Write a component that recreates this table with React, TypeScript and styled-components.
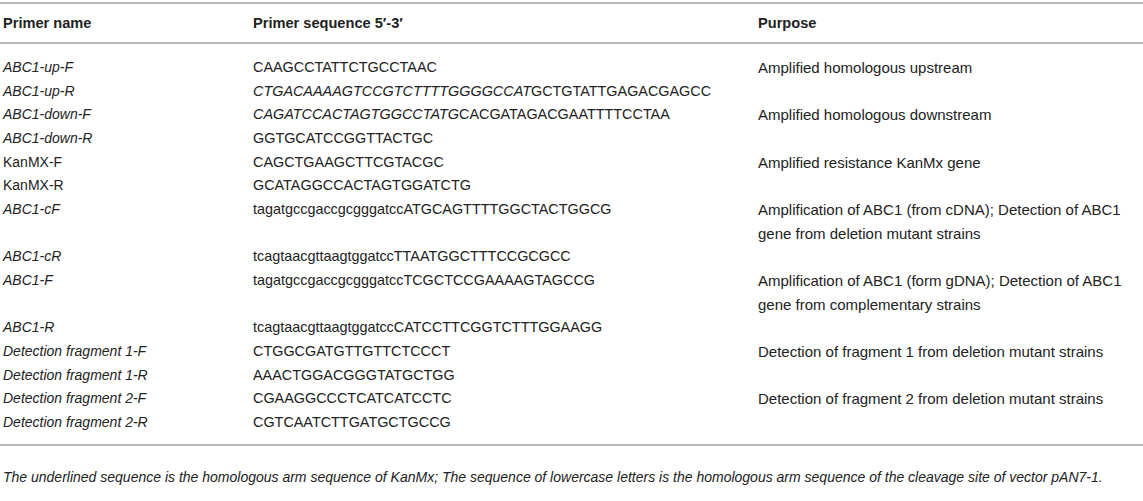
import React from "react";
import styled, { createGlobalStyle } from "styled-components";

const Global = createGlobalStyle`
  html, body { margin: 0; padding: 0; background: #fff; }
  body { font-family: "Liberation Sans", Arial, Helvetica, sans-serif; color: #222; }
`;

const Wrap = styled.div`
  width: 1143px;
  padding-top: 2px;
`;

const Grid = styled.div`
  display: grid;
  grid-template-columns: 250px 505px 1fr;
  padding-left: 3px;
  font-size: 14px;
`;

const HeaderRow = styled.div`
  display: contents;
`;

const HeadCell = styled.div`
  font-weight: bold;
  font-size: 14.6px;
  line-height: 38px;
  border-top: 2px solid #b8b8b8;
  border-bottom: 2px solid #b8b8b8;
  margin-bottom: 12px;
  &:first-child { margin-left: -3px; padding-left: 3px; }
`;

type Kind = "name" | "seq" | "purpose";

const sizes: Record<Kind, string> = { name: "14px", seq: "14.4px", purpose: "15px" };

const Cell = styled.div<{ $kind: Kind; $italic?: boolean; $last?: boolean }>`
  font-size: ${(p) => sizes[p.$kind]};
  line-height: 23.67px;
  font-style: ${(p) => (p.$italic ? "italic" : "normal")};
  padding-bottom: ${(p) => (p.$last ? "9px" : "0")};
  padding-right: ${(p) => (p.$kind === "purpose" ? "12px" : "10px")};
`;

const Em = styled.span`
  font-style: italic;
`;

const Rule = styled.div`
  border-top: 2px solid #b8b8b8;
`;

const Note = styled.p`
  margin: 0;
  padding: 22px 0 0 3px;
  font-size: 14px;
  font-style: italic;
  line-height: 18px;
`;

type Row = { name: string; italic: boolean; seq: React.ReactNode; purpose?: string };

const rows: Row[] = [
  { name: "ABC1-up-F", italic: true, seq: "CAAGCCTATTCTGCCTAAC", purpose: "Amplified homologous upstream" },
  { name: "ABC1-up-R", italic: true, seq: (<><Em>CTGACAAAAGTCCGTCTTTTGGGGCCAT</Em>GCTGTATTGAGACGAGCC</>) },
  { name: "ABC1-down-F", italic: true, seq: (<><Em>CAGATCCACTAGTGGCCTATG</Em>CACGATAGACGAATTTTCCTAA</>), purpose: "Amplified homologous downstream" },
  { name: "ABC1-down-R", italic: true, seq: "GGTGCATCCGGTTACTGC" },
  { name: "KanMX-F", italic: false, seq: "CAGCTGAAGCTTCGTACGC", purpose: "Amplified resistance KanMx gene" },
  { name: "KanMX-R", italic: false, seq: "GCATAGGCCACTAGTGGATCTG" },
  { name: "ABC1-cF", italic: true, seq: "tagatgccgaccgcgggatccATGCAGTTTTGGCTACTGGCG", purpose: "Amplification of ABC1 (from cDNA); Detection of ABC1 gene from deletion mutant strains" },
  { name: "ABC1-cR", italic: true, seq: "tcagtaacgttaagtggatccTTAATGGCTTTCCGCGCC" },
  { name: "ABC1-F", italic: true, seq: "tagatgccgaccgcgggatccTCGCTCCGAAAAGTAGCCG", purpose: "Amplification of ABC1 (form gDNA); Detection of ABC1 gene from complementary strains" },
  { name: "ABC1-R", italic: true, seq: "tcagtaacgttaagtggatccCATCCTTCGGTCTTTGGAAGG" },
  { name: "Detection fragment 1-F", italic: true, seq: "CTGGCGATGTTGTTCTCCCT", purpose: "Detection of fragment 1 from deletion mutant strains" },
  { name: "Detection fragment 1-R", italic: true, seq: "AAACTGGACGGGTATGCTGG" },
  { name: "Detection fragment 2-F", italic: true, seq: "CGAAGGCCCTCATCATCCTC", purpose: "Detection of fragment 2 from deletion mutant strains" },
  { name: "Detection fragment 2-R", italic: true, seq: "CGTCAATCTTGATGCTGCCG" },
];

export default function App() {
  return (
    <>
      <Global />
      <Wrap>
        <Grid>
          <HeaderRow>
            <HeadCell>Primer name</HeadCell>
            <HeadCell>Primer sequence 5′-3′</HeadCell>
            <HeadCell>Purpose</HeadCell>
          </HeaderRow>
          {rows.map((r, i) => {
            const last = i === rows.length - 1;
            return (
              <React.Fragment key={r.name}>
                <Cell $kind="name" $italic={r.italic} $last={last}>{r.name}</Cell>
                <Cell $kind="seq" $last={last}>{r.seq}</Cell>
                <Cell $kind="purpose" $last={last}>{r.purpose ?? ""}</Cell>
              </React.Fragment>
            );
          })}
        </Grid>
        <Rule />
        <Note>
          The underlined sequence is the homologous arm sequence of KanMx; The sequence of lowercase letters is the homologous arm sequence of the cleavage site of vector pAN7-1.
        </Note>
      </Wrap>
    </>
  );
}
